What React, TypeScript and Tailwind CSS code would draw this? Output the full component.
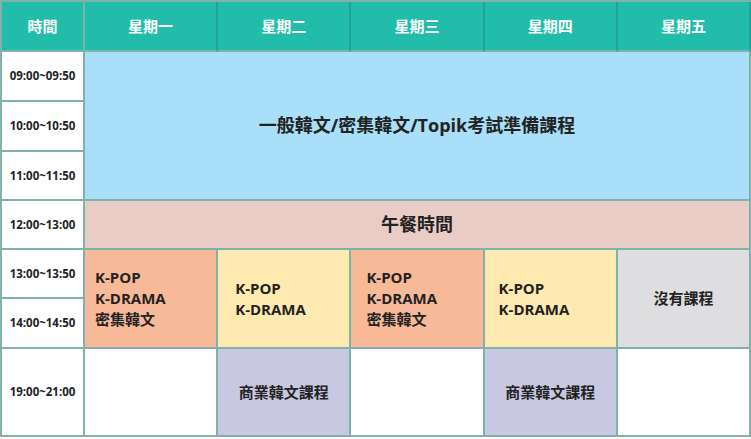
const FONT = "font-['Open_Sans','Noto_Sans_CJK_TC',sans-serif]";

const DAYS = ["星期一", "星期二", "星期三", "星期四", "星期五"];

const cell = "border-r-2 border-b-2 border-[#7db3ab] flex items-center";

function Time({ t }: { t: string }) {
  return (
    <div className={`${cell} justify-center bg-white text-[11.5px] font-bold text-[#222]`}>
      {t}
    </div>
  );
}

function KCourse({ bg, pad, extra }: { bg: string; pad: string; extra?: boolean }) {
  return (
    <div className={`${cell} row-span-2 ${bg} ${pad} text-[15px] font-bold leading-[21px] text-[#222]`}>
      <div>
        <div>K-POP</div>
        <div>K-DRAMA</div>
        {extra && <div>密集韓文</div>}
      </div>
    </div>
  );
}

export default function App() {
  return (
    <div className={`${FONT} w-[751px] h-[439px] bg-white`}>
      <div className="grid grid-cols-[83px_repeat(5,1fr)] grid-rows-[50px_50px_50px_49px_49px_49px_50px_88px] border-l-2 border-t-2 border-[#7db3ab] w-[751px]">
        {/* header */}
        <div className={`${cell} justify-center bg-[#22bcab] text-white text-[15px] font-bold`}>時間</div>
        {DAYS.map((d) => (
          <div
            key={d}
            className={`${cell} justify-center bg-[#22bcab] text-white text-[15px] font-bold border-r-[#1fa596]`}
          >
            {d}
          </div>
        ))}

        {/* morning */}
        <Time t="09:00~09:50" />
        <div className={`${cell} col-span-5 row-span-3 justify-center bg-[#a9dff9] text-[18px] font-bold text-[#222]`}>
          一般韓文/密集韓文/Topik考試準備課程
        </div>
        <Time t="10:00~10:50" />
        <Time t="11:00~11:50" />

        {/* lunch */}
        <Time t="12:00~13:00" />
        <div className={`${cell} col-span-5 justify-center bg-[#eaccc6] text-[18px] font-bold text-[#222]`}>
          午餐時間
        </div>

        {/* afternoon */}
        <Time t="13:00~13:50" />
        <KCourse bg="bg-[#f8b999]" pad="pl-[10px]" extra />
        <KCourse bg="bg-[#feeab0]" pad="pl-[17px]" />
        <KCourse bg="bg-[#f8b999]" pad="pl-[15px]" extra />
        <KCourse bg="bg-[#feeab0]" pad="pl-[14px]" />
        <div className={`${cell} row-span-2 justify-center bg-[#dedee0] text-[15px] font-bold text-[#222]`}>
          沒有課程
        </div>
        <Time t="14:00~14:50" />

        {/* evening */}
        <Time t="19:00~21:00" />
        <div className={`${cell} bg-white`} />
        <div className={`${cell} justify-center bg-[#c8c8e2] text-[15px] font-bold text-[#222]`}>商業韓文課程</div>
        <div className={`${cell} bg-white`} />
        <div className={`${cell} justify-center bg-[#c8c8e2] text-[15px] font-bold text-[#222]`}>商業韓文課程</div>
        <div className={`${cell} bg-white`} />
      </div>
    </div>
  );
}
